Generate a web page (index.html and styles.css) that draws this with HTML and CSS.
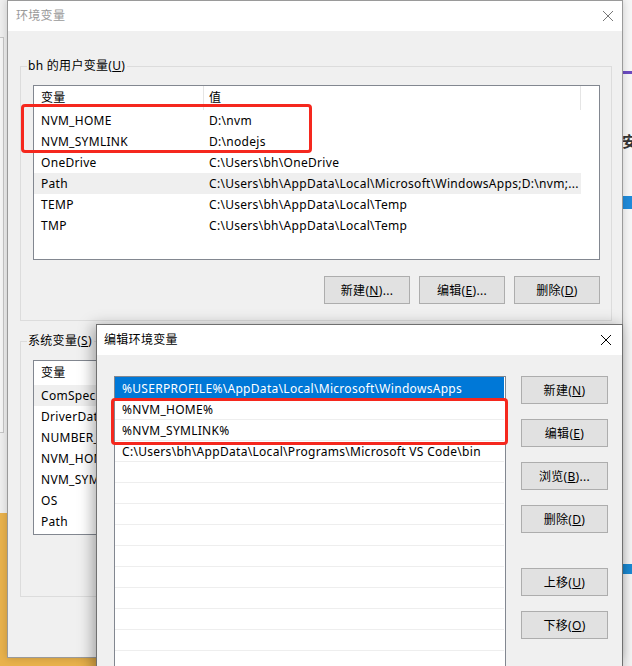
FILE: index.html
```html
<!DOCTYPE html>
<html lang="zh-CN">
<head>
  <meta charset="UTF-8" />
  <title>环境变量</title>
  <link rel="stylesheet" href="styles.css">
</head>
<body>
  <div class="desktop">
    <!-- janelas do fundo -->
    <div class="bg-left"></div>
    <div class="bg-orange"></div>
    <div class="bg-right">
      <div class="bg-purple"></div>
      <span class="bg-glyph">安</span>
      <div class="bg-blue"></div>
      <div class="bg-blue low"></div>
    </div>

    <!-- 环境变量 -->
    <div class="window main-win">
      <div class="titlebar inactive">
        <span class="title">环境变量</span>
        <svg class="close" width="10" height="10" viewBox="0 0 10 10"><path d="M0 0L10 10M10 0L0 10" /></svg>
      </div>
      <div class="win-body">
        <fieldset class="group user-group">
          <legend>bh 的用户变量(<u>U</u>)</legend>
          <div class="listview">
            <div class="lv-header">
              <span class="col-name">变量</span>
              <span class="col-value">值</span>
            </div>
            <div class="lv-row"><span class="col-name">NVM_HOME</span><span class="col-value">D:\nvm</span></div>
            <div class="lv-row"><span class="col-name">NVM_SYMLINK</span><span class="col-value">D:\nodejs</span></div>
            <div class="lv-row"><span class="col-name">OneDrive</span><span class="col-value">C:\Users\bh\OneDrive</span></div>
            <div class="lv-row hot"><span class="col-name">Path</span><span class="col-value">C:\Users\bh\AppData\Local\Microsoft\WindowsApps;D:\nvm;...</span></div>
            <div class="lv-row"><span class="col-name">TEMP</span><span class="col-value">C:\Users\bh\AppData\Local\Temp</span></div>
            <div class="lv-row"><span class="col-name">TMP</span><span class="col-value">C:\Users\bh\AppData\Local\Temp</span></div>
          </div>
          <div class="btn-row">
            <button class="btn">新建(<u>N</u>)...</button>
            <button class="btn">编辑(<u>E</u>)...</button>
            <button class="btn">删除(<u>D</u>)</button>
          </div>
        </fieldset>

        <!-- a parte direita fica coberta pela janela de edição -->
        <fieldset class="group sys-group">
          <legend>系统变量(<u>S</u>)</legend>
          <div class="listview">
            <div class="lv-header">
              <span class="col-name">变量</span>
              <span class="col-value"></span>
            </div>
            <div class="lv-row hot"><span class="col-name">ComSpec</span><span class="col-value"></span></div>
            <div class="lv-row"><span class="col-name">DriverData</span><span class="col-value"></span></div>
            <div class="lv-row"><span class="col-name">NUMBER_OF_PROCESSORS</span><span class="col-value"></span></div>
            <div class="lv-row"><span class="col-name">NVM_HOME</span><span class="col-value"></span></div>
            <div class="lv-row"><span class="col-name">NVM_SYMLINK</span><span class="col-value"></span></div>
            <div class="lv-row"><span class="col-name">OS</span><span class="col-value"></span></div>
            <div class="lv-row"><span class="col-name">Path</span><span class="col-value"></span></div>
          </div>
        </fieldset>
      </div>
    </div>

    <div class="mark mark-user"></div>

    <!-- 编辑环境变量 -->
    <div class="window edit-win">
      <div class="titlebar">
        <span class="title">编辑环境变量</span>
        <svg class="close" width="10" height="10" viewBox="0 0 10 10"><path d="M0 0L10 10M10 0L0 10" /></svg>
      </div>
      <div class="edit-body">
        <div class="edit-list">
          <div class="edit-row selected">%USERPROFILE%\AppData\Local\Microsoft\WindowsApps</div>
          <div class="edit-row">%NVM_HOME%</div>
          <div class="edit-row">%NVM_SYMLINK%</div>
          <div class="edit-row">C:\Users\bh\AppData\Local\Programs\Microsoft VS Code\bin</div>
          <div class="edit-row"></div>
          <div class="edit-row"></div>
          <div class="edit-row"></div>
          <div class="edit-row"></div>
          <div class="edit-row"></div>
          <div class="edit-row"></div>
          <div class="edit-row"></div>
          <div class="edit-row"></div>
          <div class="edit-row"></div>
          <div class="edit-row"></div>
          <div class="edit-row"></div>
        </div>
        <div class="edit-buttons">
          <button class="btn">新建(<u>N</u>)</button>
          <button class="btn">编辑(<u>E</u>)</button>
          <button class="btn">浏览(<u>B</u>)...</button>
          <button class="btn">删除(<u>D</u>)</button>
          <button class="btn move">上移(<u>U</u>)</button>
          <button class="btn">下移(<u>O</u>)</button>
        </div>
      </div>
    </div>

    <div class="mark mark-edit"></div>
  </div>
</body>
</html>
```

FILE: styles.css
```css
:root {
  --cinza-janela: #f0f0f0;
  --borda-lista: #828790;
  --borda-grupo: #dcdcdc;
  --botao: #e1e1e1;
  --borda-botao: #adadad;
  --azul: #0078d7;
  --vermelho: #f5281e;
}

* {
  box-sizing: border-box;
}

body {
  margin: 0;
  font-family: "Noto Sans", "Noto Sans CJK SC", sans-serif;
  font-size: 12px;
  letter-spacing: 0.3px;
  line-height: 16px;
  color: #000;
  background: #f2f2f2;
}

.desktop {
  position: relative;
  width: 632px;
  height: 666px;
  overflow: hidden;
  background: #efefef;
}

/* fundo */
.bg-left {
  position: absolute;
  left: -20px;
  top: 37px;
  width: 24px;
  height: 396px;
  border: 1px solid #c6c6c6;
  background: #f6f6f6;
}

.bg-orange {
  position: absolute;
  left: 0;
  top: 513px;
  width: 200px;
  height: 153px;
  background: #e9b24c;
}

.bg-right {
  position: absolute;
  left: 618px;
  top: 0;
  width: 20px;
  height: 666px;
  background: #f6f6f6;
}

.bg-purple {
  margin-top: 71px;
  height: 3px;
  background: #6a4bc0;
}

.bg-glyph {
  display: block;
  margin: 58px 0 0 4px;
  font-size: 15px;
  font-weight: bold;
  color: #333;
  line-height: 18px;
}

.bg-blue {
  margin-top: 46px;
  height: 13px;
  background: #1f8ad9;
}

.bg-blue.low {
  margin-top: 355px;
  height: 10px;
  background: #1a8ad4;
}

/* janelas */
.window {
  position: absolute;
  display: flex;
  flex-direction: column;
  background: var(--cinza-janela);
  border: 1px solid #9a9a9a;
}

.main-win {
  left: 7px;
  top: 0;
  width: 616px;
  height: 658px;
  box-shadow: 0 0 8px rgba(0, 0, 0, 0.18);
}

.edit-win {
  left: 96px;
  top: 324px;
  width: 527px;
  height: 360px;
  border-color: #707070;
  box-shadow: -3px 2px 14px rgba(0, 0, 0, 0.35);
}

.titlebar {
  flex: none;
  height: 30px;
  background: #fff;
  display: flex;
  align-items: center;
  justify-content: space-between;
  padding: 0 11px 0 7px;
}

.main-win .titlebar {
  padding: 0 9px 0 8px;
}

.close path {
  stroke: #000;
  stroke-width: 1;
  fill: none;
}

.titlebar.inactive .title {
  color: #999;
}

.titlebar.inactive .close path {
  stroke: #777;
}

.win-body {
  padding: 0 10px 0 12px;
}

/* grupos */
.group {
  margin: 0;
  padding: 11px 11px 16px 12px;
  border: 1px solid var(--borda-grupo);
  min-width: 0;
}

.user-group {
  margin-top: 27px;
}

.sys-group {
  margin-top: 12px;
  padding-bottom: 61px;
}

.group legend {
  padding: 0 2px 0 1px;
  margin-left: -6px;
}

.listview {
  height: 175px;
  border: 1px solid var(--borda-lista);
  background: #fff;
  overflow: hidden;
}

.lv-header,
.lv-row {
  display: flex;
  width: 547px;
  white-space: nowrap;
}

.lv-header {
  height: 24px;
  align-items: center;
}

.lv-row {
  height: 21px;
  align-items: center;
}

.lv-row.hot {
  background: #efefef;
}

.col-name {
  flex: none;
  width: 170px;
  padding-left: 7px;
  overflow: hidden;
}

.col-value {
  flex: none;
  width: 377px;
  padding-left: 5px;
  overflow: hidden;
}

.lv-header span {
  height: 100%;
  display: flex;
  align-items: center;
  border-right: 1px solid #e5e5e5;
}

.btn-row {
  display: flex;
  justify-content: flex-end;
  gap: 9px;
  margin-top: 16px;
}

.btn {
  height: 28px;
  width: 86px;
  padding: 0;
  background: var(--botao);
  border: 1px solid var(--borda-botao);
  border-radius: 0;
  font-family: inherit;
  font-size: 12px;
  letter-spacing: 0.3px;
  color: #000;
}

/* editar */
.edit-body {
  flex: 1;
  display: flex;
  gap: 15px;
  padding: 21px 14px 0 17px;
}

.edit-list {
  flex: none;
  width: 392px;
  height: 330px;
  padding-right: 1px;
  border: 1px solid var(--borda-lista);
  background: #fff;
  overflow: hidden;
}

.edit-row {
  height: 21px;
  padding: 1px 0 0 7px;
  display: flex;
  align-items: center;
  white-space: nowrap;
  border-top: 1px solid #eeeeee;
}

.edit-row.selected {
  background: var(--azul);
  border-top-color: var(--azul);
  color: #fff;
}

.edit-buttons {
  flex: none;
  display: flex;
  flex-direction: column;
  gap: 15px;
}

.edit-buttons .btn {
  width: 87px;
}

.edit-buttons .move {
  margin-top: 20px;
}

/* marcações vermelhas */
.mark {
  position: absolute;
  border: 3px solid var(--vermelho);
  border-radius: 4px;
  pointer-events: none;
}

.mark-user {
  left: 21px;
  top: 104px;
  width: 291px;
  height: 49px;
}

.mark-edit {
  left: 111px;
  top: 398px;
  width: 397px;
  height: 47px;
}
```
